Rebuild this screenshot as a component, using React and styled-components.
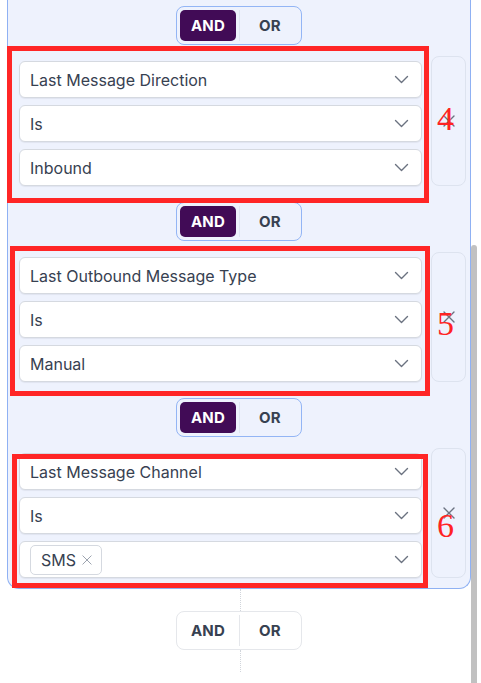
import React from 'react';
import styled, { createGlobalStyle } from 'styled-components';

const GlobalStyle = createGlobalStyle`
  html, body {
    margin: 0;
    padding: 0;
    background: #ffffff;
  }

  body {
    font-family: Inter, "Noto Sans", sans-serif;
  }

  #root {
    height: 683px;
    overflow: hidden;
  }
`;

const groups = [
  {
    id: 4,
    fields: ['Last Message Direction', 'Is', 'Inbound'],
    frame: { top: -10, left: -12, right: 37, bottom: -17 },
    labelTop: 45,
  },
  {
    id: 5,
    fields: ['Last Outbound Message Type', 'Is', 'Manual'],
    frame: { top: -6, left: -9, right: 36, bottom: -14 },
    labelTop: 54,
  },
  {
    id: 6,
    fields: ['Last Message Channel', 'Is', null],
    frame: { top: 6, left: -7, right: 38, bottom: -10 },
    labelTop: 60,
  },
];

function Chevron() {
  return (
    <svg width="15" height="9" viewBox="0 0 15 9" fill="none">
      <polyline
        points="1.5,1.5 7.5,7.5 13.5,1.5"
        stroke="#6b7280"
        strokeWidth="1.4"
        strokeLinecap="round"
        strokeLinejoin="round"
      />
    </svg>
  );
}

function Cross({ size = 12, color = '#6b7280', width = 1.4 }) {
  return (
    <svg width={size} height={size} viewBox="0 0 12 12" fill="none">
      <path
        d="M1 1L11 11M11 1L1 11"
        stroke={color}
        strokeWidth={width}
        strokeLinecap="round"
      />
    </svg>
  );
}

function Toggle({ $plain }) {
  return (
    <ToggleWrap $plain={$plain}>
      <ToggleButton $active={!$plain}>AND</ToggleButton>
      <ToggleButton $divider $plain={$plain}>
        OR
      </ToggleButton>
    </ToggleWrap>
  );
}

export default function App() {
  return (
    <>
      <GlobalStyle />
      <Screen>
        <Content>
          <Panel>
            {groups.map((group) => (
              <React.Fragment key={group.id}>
                <Toggle />
                <ConditionRow>
                  <Fields>
                    {group.fields.map((field, j) => (
                      <Select key={j}>
                        {field ? (
                          <SelectText>{field}</SelectText>
                        ) : (
                          <Tag>
                            SMS
                            <Cross size={10} color="#9ca3af" width={1.2} />
                          </Tag>
                        )}
                        <Chevron />
                      </Select>
                    ))}
                  </Fields>
                  <DeleteCell>
                    <Cross />
                    <StepLabel $top={group.labelTop}>{group.id}</StepLabel>
                  </DeleteCell>
                  <Highlight {...group.frame} />
                </ConditionRow>
              </React.Fragment>
            ))}
          </Panel>
          <Footer>
            <Dotted />
            <Toggle $plain />
            <Dotted />
          </Footer>
        </Content>
        <Scrollbar>
          <Thumb />
        </Scrollbar>
      </Screen>
    </>
  );
}

const Screen = styled.div`
  display: flex;
  height: 683px;
`;

const Content = styled.div`
  width: 471px;
  flex-shrink: 0;
`;

const ToggleWrap = styled.div`
  display: flex;
  align-items: stretch;
  padding: 3px;
  box-sizing: border-box;
  height: 39px;
  width: 126px;
  border-radius: 8px;
  border: 1px solid ${({ $plain }) => ($plain ? '#e5e7eb' : '#93b5f5')};
  background: ${({ $plain }) => ($plain ? '#ffffff' : 'transparent')};
`;

const ToggleButton = styled.div`
  flex: 1;
  display: flex;
  align-items: center;
  justify-content: center;
  font-size: 15px;
  font-weight: 700;
  letter-spacing: 0.2px;
  color: ${({ $active }) => ($active ? '#ffffff' : '#374151')};
  background: ${({ $active }) => ($active ? '#410b56' : 'transparent')};
  border-left: ${({ $divider, $plain }) =>
    $divider ? `1px solid ${$plain ? '#e5e7eb' : '#dfe5f3'}` : 'none'};
  margin-left: ${({ $divider }) => ($divider ? '3px' : '0')};
  padding-left: ${({ $divider }) => ($divider ? '2px' : '0')};
  border-radius: ${({ $divider }) => ($divider ? '0' : '5px')};
`;

const Panel = styled.section`
  margin-left: 7px;
  width: 464px;
  box-sizing: border-box;
  padding: 6px 4px 10px 11px;
  background: #eef2fd;
  border: 1px solid #8fb1f3;
  border-top: none;
  border-radius: 0 0 12px 12px;
  display: flex;
  flex-direction: column;

  & > ${ToggleWrap} {
    align-self: center;
    margin: 16px 7px 11px 0;
  }

  & > ${ToggleWrap}:first-child {
    margin-top: 0;
  }
`;

const ConditionRow = styled.div`
  position: relative;
  display: flex;
  gap: 9px;
  height: 130px;
`;

const Fields = styled.div`
  flex: 1;
  display: flex;
  flex-direction: column;
  gap: 7px;
  padding-top: 5px;
`;

const Select = styled.div`
  height: 37px;
  box-sizing: border-box;
  display: flex;
  align-items: center;
  justify-content: space-between;
  padding: 0 12px 0 10px;
  background: #ffffff;
  border: 1px solid #d5d9e0;
  border-radius: 6px;
  box-shadow: 0 1px 1px rgba(15, 23, 42, 0.06);
`;

const SelectText = styled.span`
  font-size: 16px;
  color: #374151;
`;

const Tag = styled.span`
  display: inline-flex;
  align-items: center;
  gap: 6px;
  height: 30px;
  box-sizing: border-box;
  padding: 0 9px 0 10px;
  border: 1px solid #d5d9e0;
  border-radius: 5px;
  font-size: 16px;
  color: #374151;
`;

const DeleteCell = styled.div`
  position: relative;
  width: 35px;
  box-sizing: border-box;
  display: flex;
  align-items: center;
  justify-content: center;
  border: 1px solid #dde3ef;
  border-radius: 8px;
`;

const StepLabel = styled.span`
  position: absolute;
  left: 5px;
  top: ${({ $top }) => $top}px;
  font-family: "Liberation Serif", serif;
  font-size: 34px;
  line-height: 1;
  color: #ff2323;
  pointer-events: none;
`;

const Highlight = styled.div`
  position: absolute;
  top: ${({ top }) => top}px;
  left: ${({ left }) => left}px;
  right: ${({ right }) => right}px;
  bottom: ${({ bottom }) => bottom}px;
  border: 5px solid #ff2626;
  pointer-events: none;
  z-index: 2;
`;

const Footer = styled.div`
  margin-left: 7px;
  width: 464px;
  display: flex;
  flex-direction: column;
  align-items: center;
`;

const Dotted = styled.div`
  height: 22px;
  margin-left: 3px;
  border-left: 1px dotted #d1d5db;
`;

const Scrollbar = styled.div`
  width: 10px;
  display: flex;
  flex-direction: column;
  padding-top: 245px;
  box-sizing: border-box;
`;

const Thumb = styled.div`
  flex: 1;
  width: 6px;
  background: #c1c1c1;
  border-radius: 3px 3px 0 0;
`;
